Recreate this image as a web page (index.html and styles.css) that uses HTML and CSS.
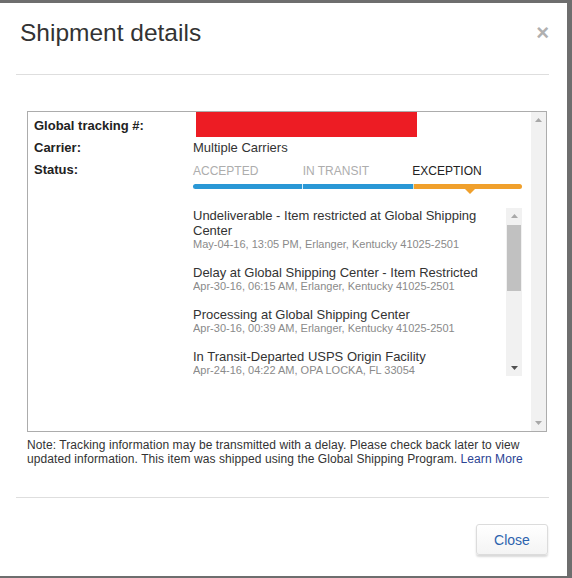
FILE: index.html
```html
<!DOCTYPE html>
<html lang="en">
<head>
  <meta charset="UTF-8" />
  <meta name="viewport" content="width=device-width, initial-scale=1" />
  <title>Shipment details</title>
  <link rel="stylesheet" href="styles.css">
</head>
<body>
  <div class="modal">
    <div class="modal-header">
      <h2 class="modal-title">Shipment details</h2>
      <span class="close-x">&times;</span>
    </div>

    <div class="modal-body">
      <div class="details-box">
        <div class="details">
          <div class="row">
            <div class="label">Global tracking #:</div>
            <div class="value tracking"><span class="redacted"></span></div>
          </div>
          <div class="row">
            <div class="label">Carrier:</div>
            <div class="value">Multiple Carriers</div>
          </div>
          <div class="row">
            <div class="label">Status:</div>
            <div class="value">
              <div class="steps">
                <span class="step">ACCEPTED</span>
                <span class="step">IN TRANSIT</span>
                <span class="step current">EXCEPTION</span>
              </div>
              <div class="bar">
                <span class="seg done"></span>
                <span class="seg done"></span>
                <span class="seg exception"></span>
              </div>

              <div class="events-box">
                <ul class="events">
                  <li>
                    <div class="ev-title">Undeliverable - Item restricted at Global Shipping Center</div>
                    <div class="ev-meta">May-04-16, 13:05 PM, Erlanger, Kentucky 41025-2501</div>
                  </li>
                  <li>
                    <div class="ev-title">Delay at Global Shipping Center - Item Restricted</div>
                    <div class="ev-meta">Apr-30-16, 06:15 AM, Erlanger, Kentucky 41025-2501</div>
                  </li>
                  <li>
                    <div class="ev-title">Processing at Global Shipping Center</div>
                    <div class="ev-meta">Apr-30-16, 00:39 AM, Erlanger, Kentucky 41025-2501</div>
                  </li>
                  <li>
                    <div class="ev-title">In Transit-Departed USPS Origin Facility</div>
                    <div class="ev-meta">Apr-24-16, 04:22 AM, OPA LOCKA, FL 33054</div>
                  </li>
                </ul>
                <div class="scrollbar inner">
                  <span class="sb-btn"><svg width="7" height="4" viewBox="0 0 7 4"><path d="M0 4 L3.5 0 L7 4 Z" fill="#a8a8a8"/></svg></span>
                  <span class="sb-track"><span class="sb-thumb"></span></span>
                  <span class="sb-btn"><svg width="7" height="4" viewBox="0 0 7 4"><path d="M0 0 L3.5 4 L7 0 Z" fill="#505050"/></svg></span>
                </div>
              </div>
            </div>
          </div>
        </div>
        <div class="scrollbar outer">
          <span class="sb-btn"><svg width="7" height="4" viewBox="0 0 7 4"><path d="M0 4 L3.5 0 L7 4 Z" fill="#a8a8a8"/></svg></span>
          <span class="sb-track"></span>
          <span class="sb-btn"><svg width="7" height="4" viewBox="0 0 7 4"><path d="M0 0 L3.5 4 L7 0 Z" fill="#a8a8a8"/></svg></span>
        </div>
      </div>

      <p class="note">Note: Tracking information may be transmitted with a delay. Please check back later to view updated information. This item was shipped using the Global Shipping Program. <a href="#">Learn More</a></p>
    </div>

    <div class="modal-footer">
      <button class="btn">Close</button>
    </div>
  </div>
</body>
</html>
```

FILE: styles.css
```css
body {
  margin: 0;
  background-color: #6e6e6e;
  font-family: "Liberation Sans", Arial, sans-serif;
  color: #333;
}

.modal {
  box-sizing: border-box;
  width: 567px;
  height: 573px;
  margin-top: 3px;
  padding: 0 18px 0 16px;
  background-color: #fff;
  display: flex;
  flex-direction: column;
}

.modal-header {
  display: flex;
  justify-content: space-between;
  align-items: center;
  padding: 16px 0 27px 4px;
  border-bottom: 1px solid #dedede;
}

.modal-title {
  margin: 0;
  font-size: 24.5px;
  font-weight: normal;
  line-height: 28px;
  color: #333;
}

.close-x {
  font-size: 22px;
  font-weight: bold;
  line-height: 20px;
  color: #b0b0b0;
}

.modal-body {
  padding: 36px 2px 0 11px;
}

.details-box {
  box-sizing: border-box;
  height: 321px;
  border: 1px solid #acacac;
  display: flex;
}

.details {
  flex: 1;
  padding: 3px 0 0 6px;
  overflow: hidden;
}

.row {
  display: flex;
  font-size: 13px;
  line-height: 22px;
}

.label {
  width: 159px;
  font-weight: bold;
  color: #222;
}

.value {
  width: 329px;
}

.tracking {
  position: relative;
}

.redacted {
  position: absolute;
  left: 3px;
  top: -5px;
  width: 221px;
  height: 27px;
  background-color: #ed1c24;
}

.steps {
  display: flex;
  font-size: 12px;
  padding-top: 1px;
}

.step {
  width: 110px;
  color: #adadad;
}

.step.current {
  color: #222;
}

.bar {
  display: flex;
  height: 5px;
  margin-top: 2px;
}

.seg {
  width: 110px;
  height: 5px;
}

.seg.done {
  background-color: #2a98d6;
}

.seg.done:first-child {
  border-radius: 3px 0 0 3px;
  border-right: 1px solid #d8eefa;
  width: 109px;
}

.seg.done + .seg.done {
  border-right: 1px solid #cfe3cf;
}

.seg.exception {
  background-color: #f0a02c;
  border-radius: 0 3px 3px 0;
  position: relative;
  width: 108px;
}

.seg.exception::after {
  content: "";
  position: absolute;
  left: 51px;
  top: 5px;
  border-left: 5px solid transparent;
  border-right: 5px solid transparent;
  border-top: 5px solid #f0a02c;
}

.events-box {
  display: flex;
  height: 168px;
  margin-top: 19px;
}

.events {
  flex: 1;
  list-style: none;
  margin: 0;
  padding: 0;
  overflow: hidden;
}

.events li {
  margin-bottom: 15px;
}

.ev-title {
  font-size: 13px;
  line-height: 15px;
  color: #333;
}

.ev-meta {
  font-size: 11px;
  line-height: 12px;
  color: #8a8a8a;
}

.scrollbar {
  display: flex;
  flex-direction: column;
  background-color: #f1f1f1;
}

.scrollbar.inner {
  width: 16px;
}

.scrollbar.outer {
  width: 15px;
}

.sb-btn {
  height: 16px;
  display: flex;
  align-items: center;
  justify-content: center;
}

.sb-track {
  flex: 1;
}

.sb-thumb {
  display: block;
  width: 14px;
  height: 66px;
  margin: 1px auto 0;
  background-color: #c1c1c1;
}

.note {
  width: 512px;
  margin: 6px 0 0;
  font-size: 12px;
  line-height: 14px;
  letter-spacing: 0.08px;
  color: #333;
}

.note a {
  color: #2b4394;
  text-decoration: none;
}

.modal-footer {
  margin-top: 31px;
  border-top: 1px solid #dedede;
  padding-top: 26px;
  display: flex;
  justify-content: flex-end;
}

.btn {
  width: 72px;
  height: 31px;
  margin-right: 1px;
  font-family: "Liberation Sans", Arial, sans-serif;
  font-size: 14px;
  color: #2d63ae;
  background: linear-gradient(#ffffff, #f4f4f4);
  border: 1px solid #dcdcdc;
  border-radius: 3px;
  box-shadow: 0 2px 2px rgba(0, 0, 0, 0.15);
}
```
